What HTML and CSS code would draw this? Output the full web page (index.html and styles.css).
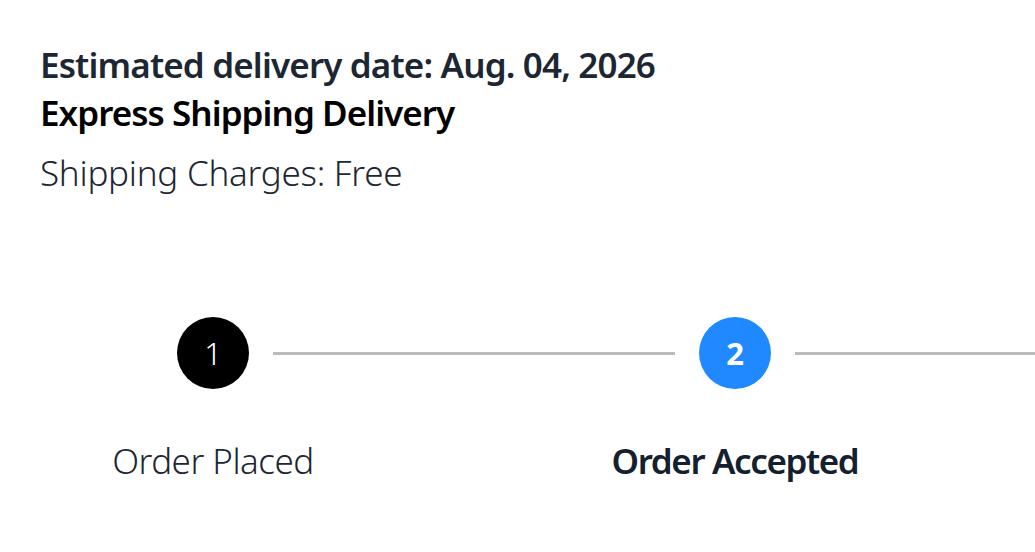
FILE: index.html
```html
<!DOCTYPE html>
<html lang="en">
<head>
<meta charset="utf-8">
<title>Delivery</title>
<link rel="stylesheet" href="styles.css">
</head>
<body>
<main class="page">
  <section class="info">
    <p class="date">Estimated delivery date: Aug. 04, 2026</p>
    <p class="method">Express Shipping Delivery</p>
    <p class="charges">Shipping Charges: Free</p>
  </section>
  <section class="progress">
    <div class="track">
      <span class="dot dot-done">1</span>
      <span class="connector"></span>
      <span class="dot dot-active">2</span>
      <span class="connector"></span>
    </div>
    <div class="labels">
      <span class="label">Order Placed</span>
      <span class="label label-active">Order Accepted</span>
    </div>
  </section>
</main>
</body>
</html>
```
FILE: styles.css
```css
html, body {
  margin: 0;
  padding: 0;
  background: #fff;
  overflow: hidden;
}
.page {
  font-family: "Noto Sans", "Open Sans", sans-serif;
  font-stretch: semi-condensed;
  width: 1035px;
  height: 552px;
  overflow: hidden;
}
.info {
  padding: 41px 0 0 40px;
}
.info p {
  margin: 0;
  font-size: 35px;
  line-height: 48px;
  white-space: nowrap;
}
.date {
  font-weight: 600;
  letter-spacing: -0.85px;
  color: #1c2733;
}
.method {
  font-weight: 600;
  letter-spacing: -0.95px;
  color: #000;
}
.info .charges {
  margin-top: 12px;
  font-weight: 300;
  letter-spacing: -0.25px;
  color: #1c2733;
}
.progress {
  margin-top: 120px;
}
.track {
  display: flex;
  align-items: center;
  padding-left: 177px;
  width: max-content;
}
.dot {
  flex: none;
  width: 72px;
  height: 72px;
  border-radius: 50%;
  display: flex;
  align-items: center;
  justify-content: center;
  font-size: 31px;
  color: #fff;
}
.dot-done {
  background: #000;
  font-weight: 300;
}
.dot-active {
  background: #2189ff;
  font-weight: 700;
}
.connector {
  flex: none;
  width: 402px;
  height: 3px;
  margin: 0 24px;
  background: #bbb;
}
.labels {
  display: flex;
  gap: 176px;
  padding-left: 40px;
  margin-top: 48px;
  width: max-content;
}
.label {
  width: 346px;
  text-align: center;
  font-size: 35px;
  line-height: 48px;
  font-weight: 300;
  letter-spacing: -0.5px;
  color: #1c2733;
  white-space: nowrap;
}
.label-active {
  font-weight: 600;
  letter-spacing: -1.4px;
  color: #14202d;
}
```
